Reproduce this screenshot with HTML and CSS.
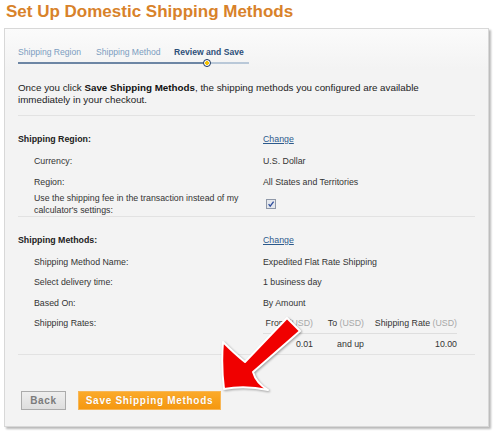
FILE: index.html
```html
<!DOCTYPE html>
<html>
<head>
<meta charset="utf-8">
<link rel="stylesheet" href="styles.css">
</head>
<body>
<h1 class="title">Set Up Domestic Shipping Methods</h1>
<div class="panel">
  <div class="steps">
    <div class="step-labels">
      <span class="step">Shipping Region</span>
      <span class="step">Shipping Method</span>
      <span class="step current">Review and Save</span>
    </div>
    <div class="track">
      <span class="track-done"></span>
      <span class="marker"></span>
      <span class="track-todo"></span>
    </div>
  </div>

  <p class="intro">Once you click <b>Save Shipping Methods</b>, the shipping methods you configured are available<br>immediately in your checkout.</p>

  <div class="section">
    <div class="row head"><span class="label">Shipping Region:</span><a class="change" href="#">Change</a></div>
    <div class="row first"><span class="label sub">Currency:</span><span class="value">U.S. Dollar</span></div>
    <div class="row"><span class="label sub">Region:</span><span class="value">All States and Territories</span></div>
    <div class="row tight"><span class="label sub">Use the shipping fee in the transaction instead of my calculator's settings:</span>
      <span class="value"><svg class="checkbox" width="10" height="10" viewBox="0 0 10 10"><rect x="0.5" y="0.5" width="9" height="9" fill="#e4e7ec" stroke="#8f98a8"/><path d="M2.6 5.2 L4.2 7.2 L7.6 2.6" fill="none" stroke="#2f4e9e" stroke-width="1.3"/></svg></span>
    </div>
  </div>

  <div class="section last">
    <div class="row head"><span class="label">Shipping Methods:</span><a class="change" href="#">Change</a></div>
    <div class="row first"><span class="label sub">Shipping Method Name:</span><span class="value">Expedited Flat Rate Shipping</span></div>
    <div class="row"><span class="label sub">Select delivery time:</span><span class="value">1 business day</span></div>
    <div class="row"><span class="label sub">Based On:</span><span class="value">By Amount</span></div>
    <div class="row"><span class="label sub">Shipping Rates:</span>
      <table class="rates">
        <thead>
          <tr><th class="c1">From <span class="unit">(USD)</span></th><th class="c2">To <span class="unit">(USD)</span></th><th class="c3">Shipping Rate <span class="unit">(USD)</span></th></tr>
        </thead>
        <tbody>
          <tr><td>0.01</td><td>and up</td><td>10.00</td></tr>
        </tbody>
      </table>
    </div>
  </div>

  <div class="actions">
    <button class="btn back">Back</button>
    <button class="btn save">Save Shipping Methods</button>
  </div>
</div>

<svg class="arrow" width="500" height="440" viewBox="0 0 500 440">
  <path d="M287 318 L300 331 L253 372 Q256 383 268 390 Q245 385 224 389 Q221 365 223 342 Q235 354 245 362 Z" fill="#f00000" stroke="#ffffff" stroke-width="2" stroke-linejoin="round"/>
</svg>
</body>
</html>
```

FILE: styles.css
```css
* { box-sizing: border-box; }

body {
  margin: 0;
  width: 500px;
  height: 440px;
  position: relative;
  overflow: hidden;
  background: #fff;
  font-family: "Liberation Sans", Arial, sans-serif;
  color: #333;
}

.title {
  margin: 2px 0 0 6px;
  font-size: 17px;
  line-height: 20px;
  font-weight: bold;
  color: #d8822a;
}

.panel {
  margin: 6px 0 0 4px;
  width: 485px;
  padding: 0 13px 16px;
  border: 1px solid #d8d8d8;
  background: linear-gradient(#fbfbfb, #f3f3f3 40px);
  box-shadow: 2px 2px 2px rgba(0, 0, 0, 0.28);
}

.steps { padding-top: 17px; }

.step-labels {
  display: flex;
  font-size: 8.6px;
  line-height: 12px;
}

.step {
  width: 78px;
  color: #7c9dc0;
  white-space: nowrap;
}

.step.current {
  color: #2e5079;
  font-weight: bold;
}

.track {
  margin-top: 1px;
  height: 8px;
  display: flex;
  align-items: center;
}

.track-done {
  width: 185px;
  height: 2px;
  background: #6d86a4;
}

.track-todo {
  width: 38px;
  height: 2px;
  background: #b9c8d8;
}

.marker {
  width: 8px;
  height: 8px;
  border-radius: 50%;
  border: 1.5px solid #17335c;
  background: radial-gradient(circle, #f6c200 0 1.6px, #ffffff 2.2px);
}

.intro {
  margin: 15px 0 0;
  font-size: 9.8px;
  line-height: 12px;
  color: #222;
}

.intro b { color: #111; }

.section {
  margin-top: 9px;
  padding-top: 17px;
  border-top: 1px solid #e2e2e2;
}

.section + .section { margin-top: 0; }

.section.last {
  padding-bottom: 4.5px;
  border-bottom: 1px solid #e2e2e2;
}

.row {
  display: grid;
  grid-template-columns: 245px 1fr;
  align-items: start;
  justify-items: start;
  margin-top: 8.5px;
  font-size: 8.8px;
  line-height: 12px;
}

.row.head { margin-top: 0; }
.row.first { margin-top: 10px; }
.row.tight { margin-top: 4px; }

.label.sub { padding-left: 16px; padding-right: 6px; }
.row.head .label { font-weight: bold; color: #222; }

.value { color: #333; }

.change {
  color: #2c5a8c;
  text-decoration: underline;
}

.checkbox {
  display: block;
  margin: 7px 0 0 3px;
}

.rates {
  border-collapse: collapse;
  font-size: 8.8px;
  line-height: 12px;
  color: #333;
}

.rates th {
  font-weight: normal;
  text-align: right;
  white-space: nowrap;
  padding: 0 0 4px;
  border-bottom: 1px solid #dedede;
}

.rates td {
  text-align: right;
  white-space: nowrap;
  padding: 3.5px 0 0;
}

.rates .c1 { width: 50px; }
.rates .c2 { width: 51px; }
.rates .c3 { width: 93px; }

.unit { color: #a8a8a8; }

.actions {
  margin-top: 36px;
  display: flex;
  gap: 12px;
  padding-left: 3px;
}

.btn {
  height: 19px;
  padding: 0;
  font-family: "Liberation Sans", Arial, sans-serif;
  font-size: 10px;
  font-weight: bold;
  letter-spacing: 0.7px;
  line-height: 17px;
  cursor: pointer;
}

.btn.back {
  width: 45px;
  color: #7b7b7b;
  border: 1px solid #ababab;
  background: linear-gradient(#eeeeee, #dedede);
}

.btn.save {
  width: 143px;
  color: #fff;
  border: 1px solid #f7b656;
  background: linear-gradient(#fbaa2a, #f59810);
  text-shadow: 0 0 1px rgba(160, 80, 0, 0.4);
}

.arrow {
  position: absolute;
  left: 0;
  top: 0;
  pointer-events: none;
  filter: drop-shadow(1px 1px 1px rgba(0, 0, 0, 0.35));
}
```
